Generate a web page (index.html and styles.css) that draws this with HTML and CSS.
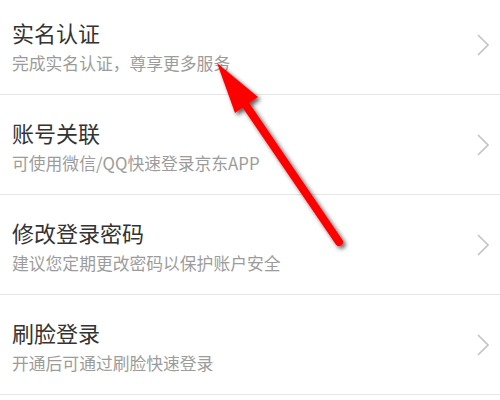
FILE: index.html
```html
<!DOCTYPE html>
<html lang="zh">
<head>
<meta charset="utf-8">
<link rel="stylesheet" href="styles.css">
</head>
<body>
<div class="page">
  <ul class="list">
    <li class="row">
      <div class="text">
        <div class="title">实名认证</div>
        <div class="sub">完成实名认证，尊享更多服务</div>
      </div>
      <svg class="chev" viewBox="0 0 12 22"><path d="M1 1 L11 11 L1 21" /></svg>
    </li>
    <li class="row">
      <div class="text">
        <div class="title">账号关联</div>
        <div class="sub">可使用微信/QQ快速登录京东APP</div>
      </div>
      <svg class="chev" viewBox="0 0 12 22"><path d="M1 1 L11 11 L1 21" /></svg>
    </li>
    <li class="row">
      <div class="text">
        <div class="title">修改登录密码</div>
        <div class="sub">建议您定期更改密码以保护账户安全</div>
      </div>
      <svg class="chev" viewBox="0 0 12 22"><path d="M1 1 L11 11 L1 21" /></svg>
    </li>
    <li class="row">
      <div class="text">
        <div class="title">刷脸登录</div>
        <div class="sub">开通后可通过刷脸快速登录</div>
      </div>
      <svg class="chev" viewBox="0 0 12 22"><path d="M1 1 L11 11 L1 21" /></svg>
    </li>
  </ul>
  <svg class="arrow" viewBox="0 0 500 400" width="500" height="400">
    <defs>
      <filter id="sh" x="-20%" y="-20%" width="140%" height="140%">
        <feDropShadow dx="2.5" dy="2.5" stdDeviation="2" flood-color="#000" flood-opacity="0.65"/>
      </filter>
    </defs>
    <g filter="url(#sh)">
      <line x1="243" y1="101" x2="339" y2="242" stroke="#ff0000" stroke-width="8" stroke-linecap="round"/>
      <polygon points="217,63 258,97 235,113" fill="#ff0000"/>
    </g>
  </svg>
</div>
</body>
</html>
```
FILE: styles.css
```css
html, body {
  margin: 0;
  padding: 0;
  background: #ffffff;
}
.page {
  position: relative;
  width: 500px;
  height: 400px;
  overflow: hidden;
  font-family: "Noto Sans CJK SC", "Noto Sans", sans-serif;
}
.list {
  list-style: none;
  margin: -5px 0 0 0;
  padding: 0;
}
.row {
  height: 99px;
  border-bottom: 1px solid #e6e6e6;
  display: flex;
  align-items: center;
  padding: 0 11px 0 12px;
  box-sizing: content-box;
}
.text {
  flex: 1;
  display: flex;
  flex-direction: column;
  gap: 5px;
  margin-top: 2px;
}
.title {
  font-size: 22px;
  line-height: 30px;
  color: #333333;
}
.sub {
  font-size: 16.8px;
  line-height: 22px;
  color: #9c9c9c;
}
.chev {
  width: 12px;
  height: 22px;
  fill: none;
  stroke: #c4c4c4;
  stroke-width: 1.6;
}
.arrow {
  position: absolute;
  left: 0;
  top: 0;
}
```
